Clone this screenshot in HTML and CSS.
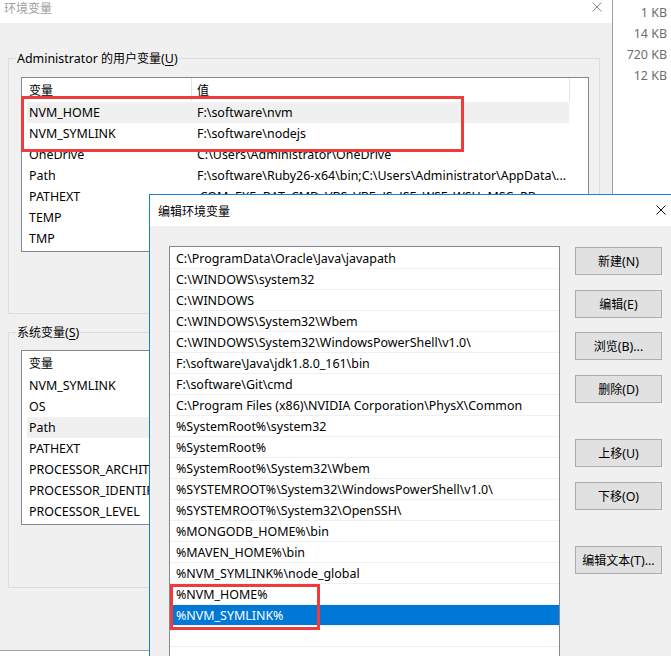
FILE: index.html
```html
<!DOCTYPE html>
<html lang="zh-CN">
<head>
<meta charset="utf-8">
<title>环境变量</title>
<link rel="stylesheet" href="styles.css">
</head>
<body>
<div class="desktop">
  <div class="explorer">
    <div>1 KB</div>
    <div>14 KB</div>
    <div>720 KB</div>
    <div>12 KB</div>
  </div>

  <div class="win bg">
    <div class="titlebar">
      <span class="title zh">环境变量</span>
      <svg class="close" width="10" height="10" viewBox="0 0 10 10"><path d="M0.5 0.5L9.5 9.5M9.5 0.5L0.5 9.5"/></svg>
    </div>
    <div class="winbody">
      <div class="group">
        <div class="group-label">Administrator <span class="zh">的用户变量</span>(<u>U</u>)</div>
        <div class="listview">
          <div class="lv-head"><div class="h1"><span class="zh">变量</span></div><div class="h2"><span class="zh">值</span></div></div>
          <div class="lv-row hot"><div class="c1">NVM_HOME</div><div class="c2">F:\software\nvm</div></div>
          <div class="lv-row"><div class="c1">NVM_SYMLINK</div><div class="c2">F:\software\nodejs</div></div>
          <div class="lv-row"><div class="c1">OneDrive</div><div class="c2">C:\Users\Administrator\OneDrive</div></div>
          <div class="lv-row"><div class="c1">Path</div><div class="c2">F:\software\Ruby26-x64\bin;C:\Users\Administrator\AppData\...</div></div>
          <div class="lv-row"><div class="c1">PATHEXT</div><div class="c2">.COM;.EXE;.BAT;.CMD;.VBS;.VBE;.JS;.JSE;.WSF;.WSH;.MSC;.RB</div></div>
          <div class="lv-row"><div class="c1">TEMP</div><div class="c2"></div></div>
          <div class="lv-row"><div class="c1">TMP</div><div class="c2"></div></div>
        </div>
      </div>
      <div class="group g2">
        <div class="group-label"><span class="zh">系统变量</span>(<u>S</u>)</div>
        <div class="listview">
          <div class="lv-head"><div class="h1"><span class="zh">变量</span></div><div class="h2"><span class="zh">值</span></div></div>
          <div class="lv-row"><div class="c1">NVM_SYMLINK</div><div class="c2"></div></div>
          <div class="lv-row"><div class="c1">OS</div><div class="c2"></div></div>
          <div class="lv-row hot"><div class="c1">Path</div><div class="c2"></div></div>
          <div class="lv-row"><div class="c1">PATHEXT</div><div class="c2"></div></div>
          <div class="lv-row"><div class="c1">PROCESSOR_ARCHITECTURE</div><div class="c2"></div></div>
          <div class="lv-row"><div class="c1">PROCESSOR_IDENTIFIER</div><div class="c2"></div></div>
          <div class="lv-row"><div class="c1">PROCESSOR_LEVEL</div><div class="c2"></div></div>
        </div>
      </div>
    </div>
  </div>

  <div class="win dlg">
    <div class="titlebar">
      <span class="title zh">编辑环境变量</span>
      <svg class="close" width="10" height="10" viewBox="0 0 10 10"><path d="M0.5 0.5L9.5 9.5M9.5 0.5L0.5 9.5"/></svg>
    </div>
    <div class="dlgbody">
      <div class="pathlist">
        <div class="item">C:\ProgramData\Oracle\Java\javapath</div>
        <div class="item">C:\WINDOWS\system32</div>
        <div class="item">C:\WINDOWS</div>
        <div class="item">C:\WINDOWS\System32\Wbem</div>
        <div class="item">C:\WINDOWS\System32\WindowsPowerShell\v1.0\</div>
        <div class="item">F:\software\Java\jdk1.8.0_161\bin</div>
        <div class="item">F:\software\Git\cmd</div>
        <div class="item">C:\Program Files (x86)\NVIDIA Corporation\PhysX\Common</div>
        <div class="item">%SystemRoot%\system32</div>
        <div class="item">%SystemRoot%</div>
        <div class="item">%SystemRoot%\System32\Wbem</div>
        <div class="item">%SYSTEMROOT%\System32\WindowsPowerShell\v1.0\</div>
        <div class="item">%SYSTEMROOT%\System32\OpenSSH\</div>
        <div class="item">%MONGODB_HOME%\bin</div>
        <div class="item">%MAVEN_HOME%\bin</div>
        <div class="item">%NVM_SYMLINK%\node_global</div>
        <div class="item">%NVM_HOME%</div>
        <div class="item sel">%NVM_SYMLINK%</div>
        <div class="item"></div>
        <div class="item"></div>
      </div>
      <div class="btns">
        <div class="btn"><span class="zh">新建</span>(N)</div>
        <div class="btn"><span class="zh">编辑</span>(E)</div>
        <div class="btn"><span class="zh">浏览</span>(B)...</div>
        <div class="btn"><span class="zh">删除</span>(D)</div>
        <div class="btn gap"><span class="zh">上移</span>(U)</div>
        <div class="btn"><span class="zh">下移</span>(O)</div>
        <div class="btn gap"><span class="zh">编辑文本</span>(T)...</div>
      </div>
    </div>
  </div>

  <div class="mark m1"></div>
  <div class="mark m2"></div>
</div>
</body>
</html>
```

FILE: styles.css
```css
* { box-sizing: border-box; }
html, body { margin: 0; padding: 0; }
body {
  width: 671px;
  height: 656px;
  overflow: hidden;
  background: #fff;
  color: #000;
  font-family: "Noto Sans", "Noto Sans CJK SC", sans-serif;
  font-size: 12.45px;
}
.zh { font-family: "Noto Sans CJK SC", sans-serif; font-size: 12px; }
u { text-decoration-thickness: 1px; text-underline-offset: 2px; }

.desktop { position: relative; width: 671px; height: 656px; overflow: hidden; }

/* explorer column behind */
.explorer {
  position: absolute;
  left: 613px;
  top: 0;
  width: 58px;
  padding-top: 2px;
  padding-right: 4px;
  text-align: right;
  color: #6d6d6d;
  line-height: 21px;
}

/* background window */
.bg {
  position: absolute;
  left: 0;
  top: 0;
  width: 613px;
  height: 651px;
  background: #f0f0f0;
  border-right: 1px solid #a0a0a0;
  border-bottom: 1px solid #a0a0a0;
}
.bg .titlebar {
  height: 23px;
  background: #fff;
  display: flex;
  justify-content: space-between;
  align-items: flex-start;
  padding: 0 10px 0 4px;
}
.bg .title { color: #a0a0a0; line-height: 15px; }
.close { fill: none; stroke-width: 1; }
.bg .close { margin-top: 2px; stroke: #8a8a8a; }

.winbody { padding: 35px 0 0 8px; }
.group {
  position: relative;
  width: 592px;
  height: 256px;
  border: 1px solid #dcdcdc;
  padding: 18px 10px 0 12px;
}
.group + .group { margin-top: 18px; }
.g2 { padding-top: 17px; }
.group-label {
  position: absolute;
  left: 7px;
  top: -9px;
  line-height: 16px;
  padding: 0 1px;
  background: #f0f0f0;
  white-space: nowrap;
}

.listview {
  width: 568px;
  height: 175px;
  background: #fff;
  border: 1px solid #828790;
  overflow: hidden;
}
.lv-head { display: flex; height: 24px; }
.lv-head .h1, .lv-head .h2 { height: 23px; line-height: 23px; border-right: 1px solid #e5e5e5; }
.lv-head .h1 { width: 170px; padding-left: 7px; }
.lv-head .h2 { width: 378px; padding-left: 5px; }
.lv-row {
  display: grid;
  grid-template-columns: 165px 377px;
  width: 542px;
  margin-left: 5px;
  height: 21px;
  line-height: 21px;
}
.lv-row > div { white-space: nowrap; overflow: hidden; }
.lv-row .c1 { padding-left: 2px; }
.lv-row .c2 { padding-left: 5px; }
.lv-row.hot { background: #f0f0f0; }

/* foreground dialog */
.dlg {
  position: absolute;
  left: 149px;
  top: 194px;
  width: 530px;
  height: 470px;
  background: #f0f0f0;
  border: 1px solid #1a80d6;
}
.dlg .titlebar {
  height: 31px;
  background: #fff;
  display: flex;
  justify-content: space-between;
  align-items: center;
  padding: 0 12px 0 8px;
}
.dlg .close { stroke: #111; margin-bottom: 2px; }
.dlgbody { display: flex; gap: 15px; padding: 20px 0 0 19px; }
.pathlist {
  width: 391px;
  height: 430px;
  background: #fff;
  border: 1px solid #828790;
  padding-top: 1px;
  overflow: hidden;
}
.item {
  height: 21px;
  padding-top: 2px;
  line-height: 18px;
  border-bottom: 1px solid #f0f0f0;
  padding-left: 6px;
  white-space: nowrap;
  overflow: hidden;
}
.item.sel { background: #0078d7; color: #fff; }

.btns { display: flex; flex-direction: column; gap: 14.67px; padding-top: 1px; width: 87px; }
.btn {
  height: 28px;
  line-height: 26px;
  text-align: center;
  background: #e1e1e1;
  border: 1px solid #adadad;
  white-space: nowrap;
}
.btn.gap { margin-top: 21.33px; }

/* annotation boxes */
.mark { position: absolute; border: 3px solid #ef3b3b; }
.m1 { left: 21px; top: 96px; width: 443px; height: 56px; }
.m2 { left: 170px; top: 584px; width: 150px; height: 46px; }
```
